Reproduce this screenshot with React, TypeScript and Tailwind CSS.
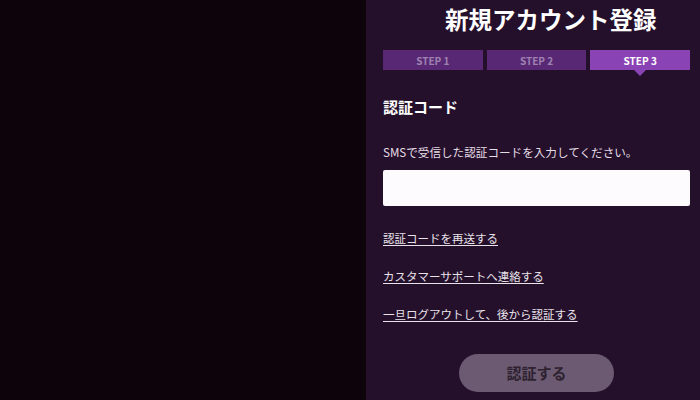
const font = { fontFamily: '"Noto Sans CJK JP", "Noto Sans", sans-serif' };

function Step(props: { label: string; active?: boolean }) {
	if (props.active) {
		return (
			<div className="relative flex-1 h-[20px] flex items-center justify-center bg-[#8a43b4] text-white text-[10px] font-bold">
				{props.label}
				<div className="absolute left-1/2 -translate-x-1/2 top-[20px] w-0 h-0 border-l-[6px] border-r-[6px] border-t-[6px] border-l-transparent border-r-transparent border-t-[#8a43b4]" />
			</div>
		);
	}
	return (
		<div className="flex-1 h-[20px] flex items-center justify-center bg-[#582874] text-[#9f82b1] text-[10px] font-bold">
			{props.label}
		</div>
	);
}

export default function App() {
	const links = [
		"認証コードを再送する",
		"カスタマーサポートへ連絡する",
		"一旦ログアウトして、後から認証する",
	];
	return (
		<div className="w-[700px] h-[400px] flex overflow-hidden" style={font}>
			<div className="w-[366px] h-full bg-[#0c030b]" />
			<div className="flex-1 h-full bg-[#25102b] pl-[17px] pr-[10px] flex flex-col">
				<h1 className="pl-[62px] pt-[3px] h-[34px] text-[23.5px] leading-[32px] font-bold text-white">
					新規アカウント登録
				</h1>
				<div className="mt-[16px] flex gap-[4px]">
					<Step label="STEP 1" />
					<Step label="STEP 2" />
					<Step label="STEP 3" active />
				</div>
				<div className="mt-[27px] text-[15px] leading-[20px] font-bold text-white">
					認証コード
				</div>
				<div className="mt-[27px] text-[11.6px] leading-[16px] text-[#e4dde6]">
					SMSで受信した認証コードを入力してください。
				</div>
				<div className="mt-[10px] h-[36px] bg-[#fdfbfd] rounded-[2px]" />
				<div className="mt-[24px] flex flex-col gap-[22px]">
					{links.map((text, i) => (
						<a
							key={i}
							className="text-[11.5px] leading-[16px] text-[#e8e2ea] underline underline-offset-2 self-start"
						>
							{text}
						</a>
					))}
				</div>
				<div className="mt-[32px] flex justify-center">
					<button className="w-[155px] h-[38px] rounded-full bg-[#6c5a72] text-[#2e2230] text-[15px] font-bold">
						認証する
					</button>
				</div>
			</div>
		</div>
	);
}
